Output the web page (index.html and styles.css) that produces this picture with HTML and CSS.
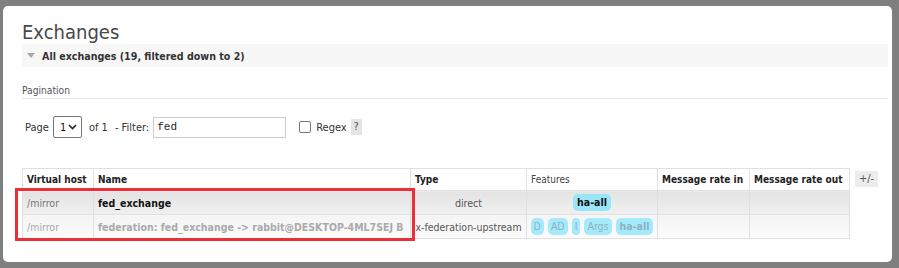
FILE: index.html
```html
<!DOCTYPE html>
<html>
<head>
<meta charset="utf-8">
<link rel="stylesheet" href="styles.css">
</head>
<body>
<div class="window">
  <h1 class="title">Exchanges</h1>
  <div class="section-head">
    <svg class="tri" width="8" height="5" viewBox="0 0 8 5"><polygon points="0,0 8,0 4,5" fill="#aaa"/></svg>
    <span>All exchanges (19, filtered down to 2)</span>
  </div>
  <div class="pag-label">Pagination</div>
  <div class="pag-row">
    <span class="lbl">Page</span>
    <span class="select"><span>1</span><svg width="9" height="6" viewBox="0 0 9 6"><polyline points="1,1 4.5,4.5 8,1" fill="none" stroke="#222" stroke-width="1.6"/></svg></span>
    <span class="lbl of">of 1</span>
    <span class="lbl">- Filter:</span>
    <span class="input">fed</span>
    <span class="check"></span>
    <span class="lbl">Regex</span>
    <span class="help">?</span>
  </div>
  <div class="table-wrap">
    <table class="list">
      <colgroup>
        <col style="width:71px"><col style="width:317px"><col style="width:116px"><col style="width:131px"><col style="width:92px"><col style="width:100px">
      </colgroup>
      <thead>
        <tr>
          <th>Virtual host</th>
          <th>Name</th>
          <th>Type</th>
          <th class="plain">Features</th>
          <th>Message rate in</th>
          <th>Message rate out</th>
        </tr>
      </thead>
      <tbody>
        <tr class="alt1">
          <td class="vh">/mirror</td>
          <td class="name">fed_exchange</td>
          <td class="type">direct</td>
          <td class="feat"><div class="badges"><abbr>ha-all</abbr></div></td>
          <td></td>
          <td></td>
        </tr>
        <tr class="alt2 internal">
          <td class="vh">/mirror</td>
          <td class="name">federation: fed_exchange -&gt; rabbit@DESKTOP-4ML7SEJ B</td>
          <td class="type">x-federation-upstream</td>
          <td class="feat"><div class="badges"><abbr class="n">D</abbr><abbr class="n">AD</abbr><abbr class="n">I</abbr><abbr class="n">Args</abbr><abbr>ha-all</abbr></div></td>
          <td></td>
          <td></td>
        </tr>
      </tbody>
    </table>
    <span class="plusminus">+/-</span>
    <div class="highlight"></div>
  </div>
</div>
</body>
</html>
```
FILE: styles.css
```css
html, body {
  margin: 0;
  padding: 0;
}
body {
  background: #7f7f7f;
  font-family: "DejaVu Sans Condensed", "DejaVu Sans", sans-serif;
  font-size: 11px;
  color: #484848;
  width: 899px;
  height: 268px;
  overflow: hidden;
}
.window {
  background: #fff;
  margin: 6px 7px 0 3px;
  height: 256px;
  border-radius: 5px;
  padding: 14px 4px 0 19px;
  box-sizing: border-box;
}
.title {
  margin: 0;
  font-weight: normal;
  font-size: 20px;
  line-height: 24px;
  color: #484848;
}
.section-head {
  background: #f7f7f7;
  height: 23px;
  display: flex;
  align-items: center;
  padding-left: 5px;
  gap: 7px;
  font-weight: bold;
  font-size: 10.6px;
  color: #333;
}
.pag-label {
  margin-top: 16px;
  height: 15px;
  line-height: 15px;
  color: #555;
  font-size: 10.2px;
  border-bottom: 1px solid #e8e8e8;
}
.pag-row {
  margin-top: 17px;
  display: flex;
  align-items: center;
  height: 22px;
  padding-left: 3px;
  color: #333;
}
.lbl { margin-right: 4px; }
.of { margin-left: 3px; margin-right: 7px; }
.select {
  width: 29px;
  height: 22px;
  box-sizing: border-box;
  border: 1px solid #767676;
  border-radius: 2px;
  display: flex;
  align-items: center;
  justify-content: space-between;
  padding: 0 4px 0 6px;
  color: #111;
  margin-right: 4px;
}
.input {
  width: 133px;
  height: 21px;
  box-sizing: border-box;
  border: 1px solid #ccc;
  font-family: "Liberation Mono", monospace;
  font-size: 11px;
  line-height: 19px;
  padding-left: 3px;
  color: #222;
  margin-right: 13px;
}
.check {
  width: 10px;
  height: 10px;
  border: 1px solid #777;
  border-radius: 2px;
  margin-right: 5px;
}
.help {
  background: #e4e4e4;
  color: #555;
  width: 11px;
  height: 16px;
  line-height: 16px;
  text-align: center;
}
.table-wrap {
  position: relative;
  margin-top: 30px;
  display: flex;
  align-items: flex-start;
  gap: 5px;
}
table.list {
  border-collapse: collapse;
  table-layout: fixed;
  width: 827px;
  color: #333;
  font-size: 10.5px;
}
table.list th, table.list td {
  border: 1px solid #e0e0e0;
  padding: 0 4px;
  white-space: nowrap;
  overflow: hidden;
  text-align: left;
}
table.list th {
  height: 21px;
  font-weight: bold;
  font-size: 10px;
  color: #222;
  background: #fff;
}
table.list th.plain { font-weight: normal; color: #444; }
table.list td { height: 23px; }
tr.alt1 td { background: linear-gradient(#e3e3e3, #f0f0f0); }
tr.alt2 td { background: linear-gradient(#f4f4f4, #fbfbfb); }
td.vh { color: #777; }
td.name { font-weight: bold; color: #111; font-size: 10.5px; }
table.list td.type { text-align: center; color: #555; padding: 0; }
table.list td.feat { padding: 0; }
.badges {
  display: flex;
  justify-content: center;
  align-items: center;
  gap: 4px;
}
abbr {
  display: block;
  background: #99e6fa;
  border-radius: 5px;
  padding: 0 4px;
  height: 17px;
  line-height: 17px;
  font-weight: bold;
  color: #111;
  text-decoration: none;
}
abbr.n { font-weight: normal; padding: 0 3px; }
tr.internal td { color: #aaa; }
tr.internal abbr { background: #a6e9fa; color: #88b4c2; }
.plusminus {
  margin-top: 3px;
  background: #ececec;
  color: #555;
  width: 23px;
  height: 16px;
  line-height: 16px;
  text-align: center;
}
.highlight {
  position: absolute;
  left: -7px;
  top: 20px;
  width: 394px;
  height: 47px;
  border: 3px solid #ec3038;
}
```
